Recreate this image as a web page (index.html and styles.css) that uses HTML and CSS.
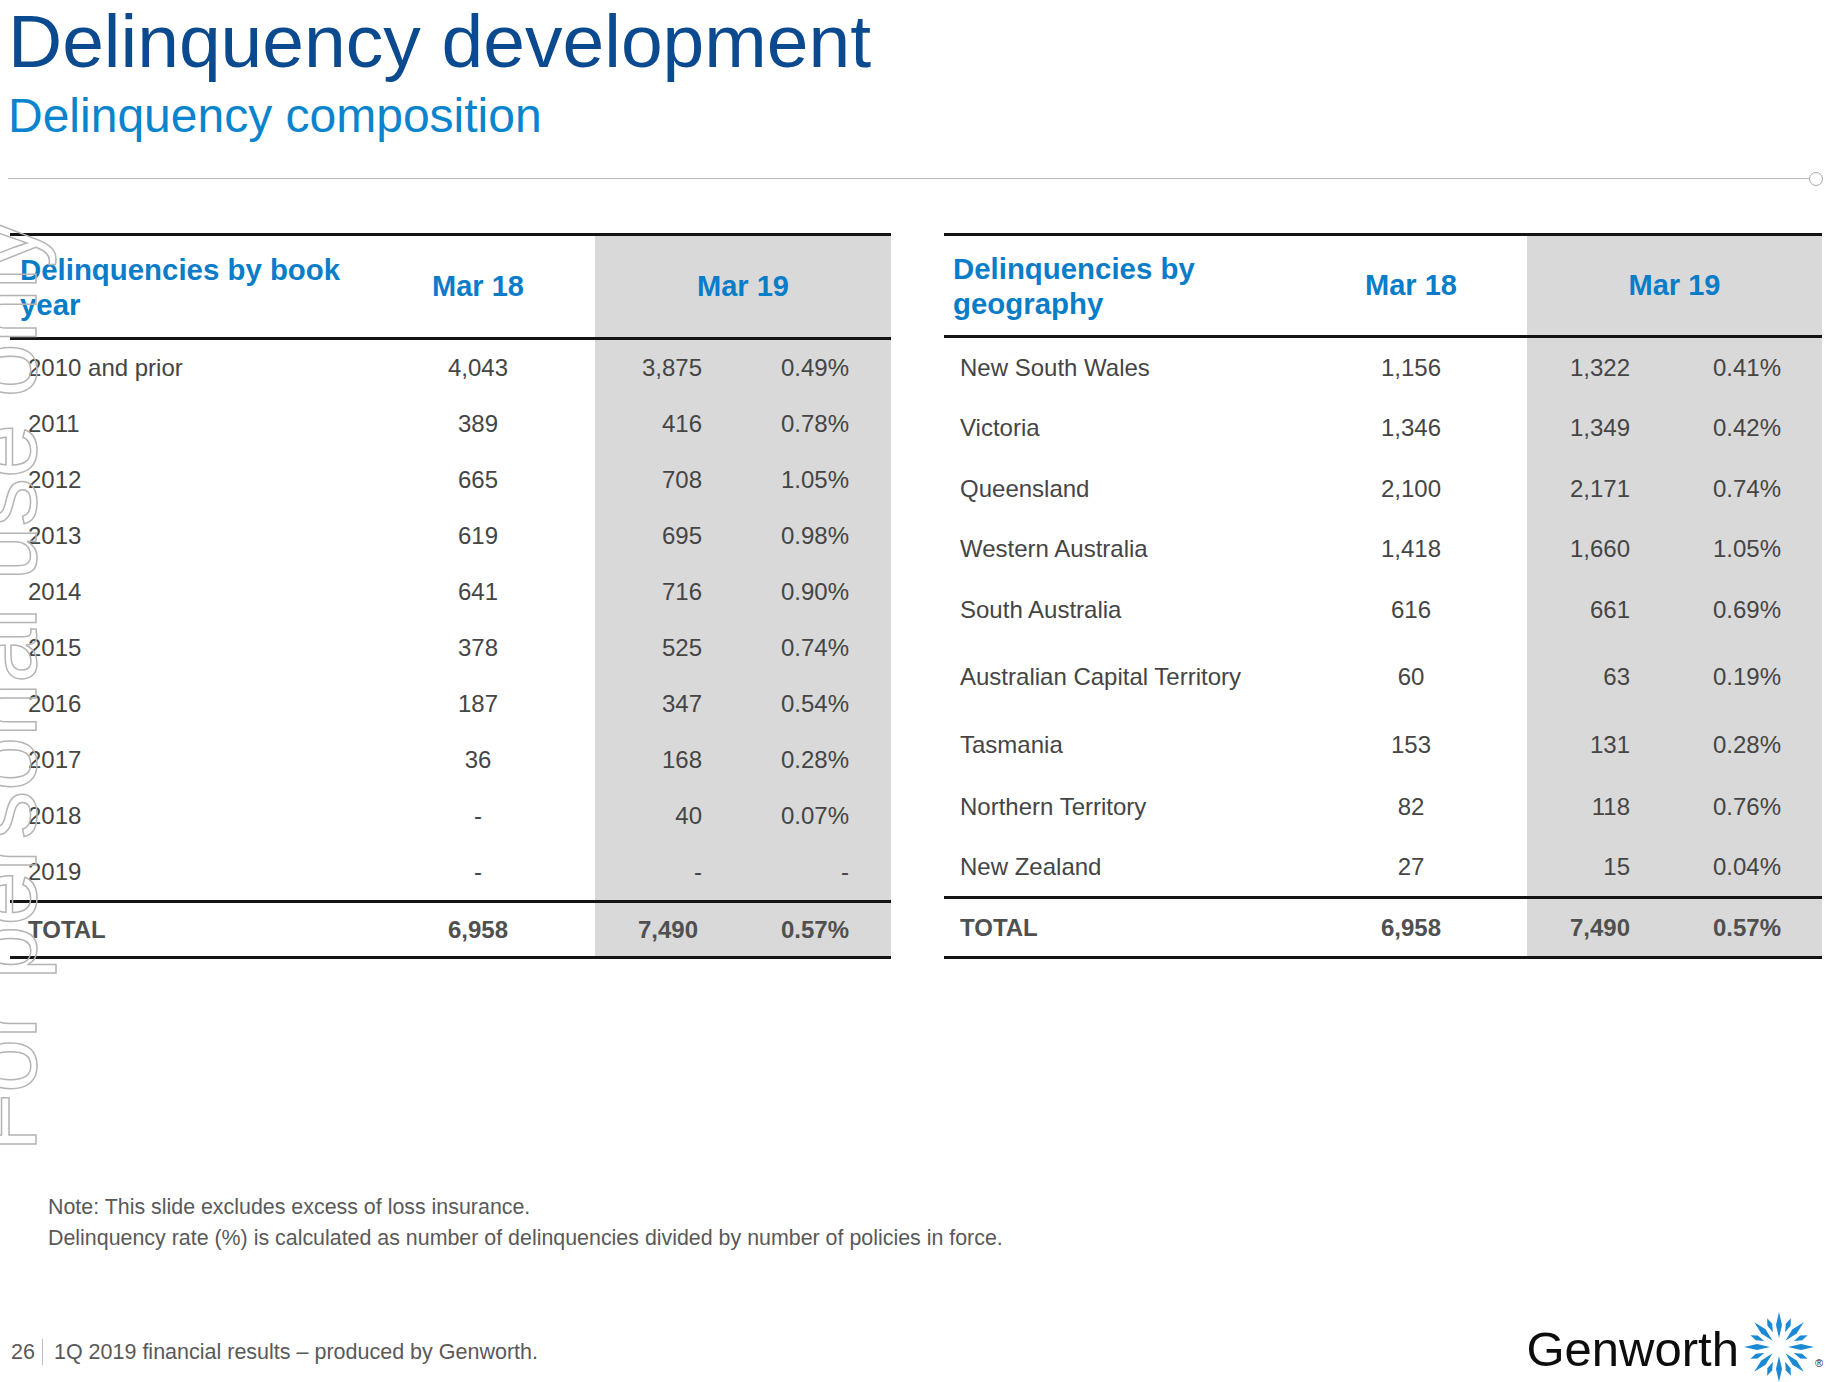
FILE: index.html
```html
<!DOCTYPE html>
<html lang="en">
<head>
<meta charset="utf-8">
<title>Delinquency development</title>
<link rel="stylesheet" href="styles.css">
</head>
<body>
<div class="page">
  <header class="head">
    <h1 class="title">Delinquency development</h1>
    <h2 class="subtitle">Delinquency composition</h2>
  </header>

  <div class="rule"><span class="rule-line"></span><span class="rule-dot"></span></div>

  <div class="tables">
    <table class="dtab tleft">
      <colgroup><col class="c-lab"><col class="c-18"><col class="c-v"><col class="c-p"></colgroup>
      <thead>
        <tr class="hrow">
          <th class="hlab">Delinquencies by book year</th>
          <th class="h18">Mar 18</th>
          <th class="h19" colspan="2">Mar 19</th>
        </tr>
      </thead>
      <tbody>
        <tr class="r56"><td class="lab">2010 and prior</td><td class="m18">4,043</td><td class="v19">3,875</td><td class="p19">0.49%</td></tr>
        <tr class="r56"><td class="lab">2011</td><td class="m18">389</td><td class="v19">416</td><td class="p19">0.78%</td></tr>
        <tr class="r56"><td class="lab">2012</td><td class="m18">665</td><td class="v19">708</td><td class="p19">1.05%</td></tr>
        <tr class="r56"><td class="lab">2013</td><td class="m18">619</td><td class="v19">695</td><td class="p19">0.98%</td></tr>
        <tr class="r56"><td class="lab">2014</td><td class="m18">641</td><td class="v19">716</td><td class="p19">0.90%</td></tr>
        <tr class="r56"><td class="lab">2015</td><td class="m18">378</td><td class="v19">525</td><td class="p19">0.74%</td></tr>
        <tr class="r56"><td class="lab">2016</td><td class="m18">187</td><td class="v19">347</td><td class="p19">0.54%</td></tr>
        <tr class="r56"><td class="lab">2017</td><td class="m18">36</td><td class="v19">168</td><td class="p19">0.28%</td></tr>
        <tr class="r56"><td class="lab">2018</td><td class="m18">-</td><td class="v19">40</td><td class="p19">0.07%</td></tr>
        <tr class="r56"><td class="lab">2019</td><td class="m18">-</td><td class="v19">-</td><td class="p19">-</td></tr>
        <tr class="trow"><td class="lab">TOTAL</td><td class="m18">6,958</td><td class="v19 v19t">7,490</td><td class="p19">0.57%</td></tr>
      </tbody>
    </table>

    <table class="dtab tright">
      <colgroup><col class="c-lab"><col class="c-18r"><col class="c-v"><col class="c-pr"></colgroup>
      <thead>
        <tr class="hrow hrow-r">
          <th class="hlab hlab-r">Delinquencies by geography</th>
          <th class="h18">Mar 18</th>
          <th class="h19" colspan="2">Mar 19</th>
        </tr>
      </thead>
      <tbody>
        <tr class="r59"><td class="lab lab-r">New South Wales</td><td class="m18">1,156</td><td class="v19 v19r">1,322</td><td class="p19 p19r">0.41%</td></tr>
        <tr class="r61"><td class="lab lab-r">Victoria</td><td class="m18">1,346</td><td class="v19 v19r">1,349</td><td class="p19 p19r">0.42%</td></tr>
        <tr class="r61"><td class="lab lab-r">Queensland</td><td class="m18">2,100</td><td class="v19 v19r">2,171</td><td class="p19 p19r">0.74%</td></tr>
        <tr class="r60"><td class="lab lab-r">Western Australia</td><td class="m18">1,418</td><td class="v19 v19r">1,660</td><td class="p19 p19r">1.05%</td></tr>
        <tr class="r61"><td class="lab lab-r">South Australia</td><td class="m18">616</td><td class="v19 v19r">661</td><td class="p19 p19r">0.69%</td></tr>
        <tr class="r74"><td class="lab lab-r">Australian Capital Territory</td><td class="m18">60</td><td class="v19 v19r">63</td><td class="p19 p19r">0.19%</td></tr>
        <tr class="r62"><td class="lab lab-r">Tasmania</td><td class="m18">153</td><td class="v19 v19r">131</td><td class="p19 p19r">0.28%</td></tr>
        <tr class="r61"><td class="lab lab-r">Northern Territory</td><td class="m18">82</td><td class="v19 v19r">118</td><td class="p19 p19r">0.76%</td></tr>
        <tr class="r59"><td class="lab lab-r">New Zealand</td><td class="m18">27</td><td class="v19 v19r">15</td><td class="p19 p19r">0.04%</td></tr>
        <tr class="trow trow-r"><td class="lab lab-r">TOTAL</td><td class="m18">6,958</td><td class="v19 v19r">7,490</td><td class="p19 p19r">0.57%</td></tr>
      </tbody>
    </table>
  </div>

  <div class="notes">
    <p>Note: This slide excludes excess of loss insurance.</p>
    <p>Delinquency rate (%) is calculated as number of delinquencies divided by number of policies in force.</p>
  </div>

  <footer class="foot">
    <div class="foot-left">
      <span class="pageno">26</span>
      <span class="foot-text">1Q 2019 financial results – produced by Genworth.</span>
    </div>
    <div class="logo">
      <span class="logo-word">Genworth</span>
      <svg class="logo-star" width="72" height="72" viewBox="-36 -36 72 72" aria-hidden="true">
        <g fill="#1b8ad3">
          <path d="M0,-35 L3,-22 L0,-9 L-3,-22 Z"/>
          <path d="M0,-35 L3,-22 L0,-9 L-3,-22 Z" transform="rotate(45)"/>
          <path d="M0,-35 L3,-22 L0,-9 L-3,-22 Z" transform="rotate(90)"/>
          <path d="M0,-35 L3,-22 L0,-9 L-3,-22 Z" transform="rotate(135)"/>
          <path d="M0,-35 L3,-22 L0,-9 L-3,-22 Z" transform="rotate(180)"/>
          <path d="M0,-35 L3,-22 L0,-9 L-3,-22 Z" transform="rotate(225)"/>
          <path d="M0,-35 L3,-22 L0,-9 L-3,-22 Z" transform="rotate(270)"/>
          <path d="M0,-35 L3,-22 L0,-9 L-3,-22 Z" transform="rotate(315)"/>
          <path d="M0,-31 L2.6,-24 L0,-16 L-2.6,-24 Z" transform="rotate(22.5)"/>
          <path d="M0,-31 L2.6,-24 L0,-16 L-2.6,-24 Z" transform="rotate(67.5)"/>
          <path d="M0,-31 L2.6,-24 L0,-16 L-2.6,-24 Z" transform="rotate(112.5)"/>
          <path d="M0,-31 L2.6,-24 L0,-16 L-2.6,-24 Z" transform="rotate(157.5)"/>
          <path d="M0,-31 L2.6,-24 L0,-16 L-2.6,-24 Z" transform="rotate(202.5)"/>
          <path d="M0,-31 L2.6,-24 L0,-16 L-2.6,-24 Z" transform="rotate(247.5)"/>
          <path d="M0,-31 L2.6,-24 L0,-16 L-2.6,-24 Z" transform="rotate(292.5)"/>
          <path d="M0,-31 L2.6,-24 L0,-16 L-2.6,-24 Z" transform="rotate(337.5)"/>
        </g>
      </svg>
      <span class="logo-reg">®</span>
    </div>
  </footer>

  <div class="watermark">For personal use only</div>
</div>
</body>
</html>
```

FILE: styles.css
```css
html, body {
  margin: 0;
  padding: 0;
  background: #ffffff;
}

.page {
  position: relative;
  width: 1834px;
  height: 1382px;
  box-sizing: border-box;
  padding: 0 11px 0 8px;
  display: flex;
  flex-direction: column;
  overflow: hidden;
  font-family: "Liberation Sans", Arial, sans-serif;
}

.head {
  margin: 0;
}

.title {
  margin: 4px 0 0 0;
  font-size: 75px;
  line-height: 75px;
  font-weight: normal;
  color: #0b4a8e;
  white-space: nowrap;
}

.subtitle {
  margin: 13px 0 0 0;
  font-size: 48px;
  line-height: 48px;
  font-weight: normal;
  color: #0a84cc;
  white-space: nowrap;
}

.rule {
  margin-top: 31px;
  height: 15px;
  display: flex;
  align-items: center;
}

.rule-line {
  flex: 1;
  height: 1px;
  background: #bdb4c6;
}

.rule-dot {
  width: 12px;
  height: 12px;
  border: 1.5px solid #a9a9a9;
  border-radius: 50%;
  background: #fff;
}

.tables {
  margin-top: 47px;
  margin-left: 2px;
  display: flex;
  gap: 53px;
  align-items: flex-start;
}

.dtab {
  border-collapse: collapse;
  table-layout: fixed;
  font-size: 24px;
  color: #454545;
}

.tleft { width: 881px; }
.tright { width: 878px; }

.c-lab { width: 351px; }
.c-18 { width: 234px; }
.c-18r { width: 232px; }
.c-v { width: 125px; }
.c-p { width: 171px; }
.c-pr { width: 170px; }

.dtab th,
.dtab td {
  padding: 0;
  vertical-align: middle;
  white-space: nowrap;
}

.hrow {
  border-top: 3px solid #141414;
  border-bottom: 3px solid #141414;
}

.hrow th {
  height: 101px;
  font-size: 29px;
  line-height: 35px;
  font-weight: bold;
  color: #0a7dc9;
}

.hrow-r th {
  height: 99px;
}

.hlab {
  text-align: left;
  padding-left: 10px !important;
  white-space: normal !important;
  font-size: 29.4px !important;
}

.hlab-r {
  padding-left: 9px !important;
}

.h18 {
  text-align: center;
}

.h19 {
  text-align: center;
  background: #d9d9d9;
}

.lab {
  text-align: left;
  padding-left: 18px !important;
}

.lab-r {
  padding-left: 16px !important;
}

.m18 {
  text-align: center;
}

.v19 {
  text-align: right;
  padding-right: 18px !important;
  background: #d9d9d9;
}

.v19t {
  padding-right: 22px !important;
}

.v19r {
  padding-right: 22px !important;
}

.p19 {
  text-align: right;
  padding-right: 42px !important;
  background: #d9d9d9;
}

.p19r {
  padding-right: 41px !important;
}

.r56 td { height: 56px; }
.r59 td { height: 59px; }
.r60 td { height: 60px; }
.r61 td { height: 61px; }
.r62 td { height: 62px; }
.r64 td { height: 64px; }
.r74 td { height: 74px; }

.trow {
  border-top: 3px solid #141414;
  border-bottom: 3px solid #141414;
}

.trow td {
  height: 53px;
  font-weight: bold;
  color: #505050;
}

.trow-r td {
  height: 57px;
}

.notes {
  margin-top: 233px;
  padding-left: 40px;
  font-size: 21.4px;
  line-height: 31px;
  color: #595959;
}

.notes p {
  margin: 0;
}

.foot {
  margin-top: auto;
  height: 70px;
  display: flex;
  justify-content: space-between;
  align-items: center;
}

.foot-left {
  display: flex;
  align-items: center;
  padding-top: 10px;
  padding-left: 3px;
  font-size: 21.5px;
  color: #595959;
}

.pageno {
  padding-right: 7px;
  border-right: 1px solid #bdbdbd;
  line-height: 26px;
}

.foot-text {
  padding-left: 11px;
  line-height: 26px;
}

.logo {
  display: flex;
  align-items: center;
  height: 70px;
}

.logo-word {
  font-size: 49px;
  line-height: 49px;
  color: #0d0d0d;
  margin-top: 4px;
}

.logo-star {
  display: block;
  margin-left: 4px;
}

.logo-reg {
  font-size: 11px;
  color: #222;
  align-self: flex-end;
  margin-bottom: 13px;
  margin-left: 0;
}

.watermark {
  position: absolute;
  left: -46px;
  top: 1152px;
  transform-origin: 0 0;
  transform: rotate(-90deg);
  font-size: 97px;
  line-height: 97px;
  white-space: nowrap;
  color: transparent;
  -webkit-text-stroke: 1.5px #b4b4b4;
  pointer-events: none;
}
```
